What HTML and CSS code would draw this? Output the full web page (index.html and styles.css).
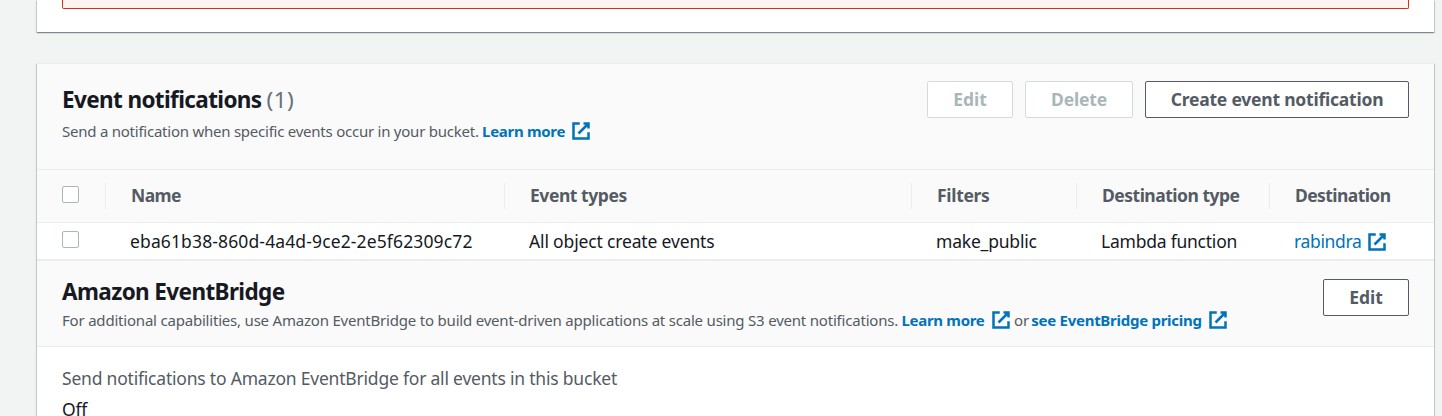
FILE: index.html
```
<!DOCTYPE html>
<html lang="en">
<head>
<meta charset="utf-8">
<title>Event notifications</title>
<link rel="stylesheet" href="styles.css">
</head>
<body>
<svg class="defs" width="0" height="0"><symbol id="external" viewBox="0 0 16 16"><path d="M10 2h4v4M6 10l8-8M14 9.05V14H2V2h5"/></symbol></svg>
<main class="page">
  <section class="card card-prev"><div class="alert"></div></section>
  <section class="card card-main">
    <header class="head head-events">
      <div>
        <h2 class="title"><span class="t-events">Event notifications</span> <span class="count">(1)</span></h2>
        <p class="desc"><span class="d-events">Send a notification when specific events occur in your bucket.</span><a class="link more">Learn more</a><svg class="icon"><use href="#external"/></svg></p>
      </div>
      <div class="actions">
        <button class="btn off b-edit"><span>Edit</span></button>
        <button class="btn off b-delete"><span>Delete</span></button>
        <button class="btn b-create"><span>Create event notification</span></button>
      </div>
    </header>
    <div class="row row-head">
      <div class="cell"><span class="box"></span></div>
      <div class="cell"><span class="h1">Name</span></div>
      <div class="cell"><span class="h2">Event types</span></div>
      <div class="cell"><span class="h3">Filters</span></div>
      <div class="cell"><span class="h4">Destination type</span></div>
      <div class="cell"><span class="h5">Destination</span></div>
    </div>
    <div class="row row-data">
      <div class="cell"><span class="box"></span></div>
      <div class="cell"><span class="c1">eba61b38-860d-4a4d-9ce2-2e5f62309c72</span></div>
      <div class="cell"><span class="c2">All object create events</span></div>
      <div class="cell"><span class="c3">make_public</span></div>
      <div class="cell"><span class="c4">Lambda function</span></div>
      <div class="cell"><a class="dest">rabindra</a><svg class="icon"><use href="#external"/></svg></div>
    </div>
    <header class="head head-bridge">
      <div>
        <h2 class="title"><span class="t-bridge">Amazon EventBridge</span></h2>
        <p class="desc"><span class="d-bridge">For additional capabilities, use Amazon EventBridge to build event-driven applications at scale using S3 event notifications.</span><a class="link more">Learn more</a><svg class="icon"><use href="#external"/></svg><span class="or">or</span><a class="link pricing">see EventBridge pricing</a><svg class="icon"><use href="#external"/></svg></p>
      </div>
      <div class="actions"><button class="btn b-edit"><span>Edit</span></button></div>
    </header>
    <div class="body">
      <div class="label">Send notifications to Amazon EventBridge for all events in this bucket</div>
      <div class="value">Off</div>
    </div>
  </section>
</main>
</body>
</html>
```
FILE: styles.css
```
* { box-sizing: border-box; }
body { margin: 0; background: #f2f3f3; color: #16191f; font: 17.5px/27.5px "Noto Sans", sans-serif; overflow: hidden; }
.defs { display: block; }
.page { height: 416px; padding: 0 8px 0 37px; display: flex; flex-direction: column; gap: 32px; overflow: hidden; }
.card { background: #fff; box-shadow: 0 1px 1px 0 rgba(0,28,36,.3), 1px 1px 1px 0 rgba(0,28,36,.15), -1px 1px 1px 0 rgba(0,28,36,.15); flex: none; }
.card-prev { height: 32px; padding: 0 25px; }
.alert { height: 9px; border: 1px solid #d13212; border-top: 0; border-radius: 0 0 2px 2px; background: #fdf3f1; }
.card-main { height: 380px; border-top: 1px solid #eaeded; margin-top: -1px; }
.head { display: flex; justify-content: space-between; padding: 0 25px; background: #fafafa; border-bottom: 1px solid #eaeded; }
.head-events { height: 106px; padding-top: 17px; }
.head-bridge { height: 86px; padding-top: 18px; }
.title { margin: 0; font-size: 22.5px; line-height: 38px; font-weight: 700; white-space: nowrap; }
.t-events { letter-spacing: -.62px; }
.t-bridge { letter-spacing: -.61px; }
.head-bridge .title { line-height: 26px; margin-bottom: 3px; }
.count { color: #687078; font-weight: 400; letter-spacing: .5px; margin-left: -1px; }
.desc { margin: 0; display: flex; align-items: center; font-size: 15px; line-height: 24px; color: #545b64; white-space: nowrap; }
.d-events { letter-spacing: -.24px; }
.d-bridge { letter-spacing: -.203px; }
.link { color: #0073bb; font-weight: 700; margin-left: 3.4px; }
.more { letter-spacing: -.3px; }
.pricing { letter-spacing: -.27px; margin-left: 2px; }
.or { margin-left: 3.5px; }
.icon { width: 20px; height: 20px; margin-left: 6px; fill: none; stroke: #0073bb; stroke-width: 2; flex: none; }
.actions { display: flex; gap: 12px; }
.btn { height: 37px; padding: 0; border: 1px solid #545b64; border-radius: 2px; background: #fff; color: #545b64; font: 700 17.5px/35px "Noto Sans", sans-serif; white-space: nowrap; }
.off { border-color: #d5dbdb; color: #aab7b8; }
.b-edit { width: 86px; }
.b-delete { width: 108px; letter-spacing: -.15px; }
.b-create { width: 264px; letter-spacing: -.22px; }
.row { display: grid; grid-template-columns: 69px 399px 407px 165px 193px 164px; align-items: center; white-space: nowrap; }
.row-head { height: 53px; background: #fafafa; border-bottom: 1px solid #eaeded; color: #545b64; font-weight: 700; }
.row-data { height: 38px; border-bottom: 2px solid #eaeded; padding-top: 2px; }
.cell { display: flex; align-items: center; padding-left: 25px; height: 26px; }
.row-data .cell + .cell { padding-left: 24px; }
.row-head .cell:not(:last-child) { border-right: 1px solid #eaeded; }
.h1 { letter-spacing: -.6px; }
.h2 { letter-spacing: -.44px; }
.h3 { letter-spacing: -.3px; }
.h4 { letter-spacing: -.5px; }
.h5 { letter-spacing: -.58px; }
.c1 { letter-spacing: .13px; }
.c2 { letter-spacing: -.16px; }
.c3 { letter-spacing: -.2px; }
.c4 { letter-spacing: -.23px; }
.box { width: 17px; height: 17px; border: 1px solid #aab7b8; border-radius: 2px; background: #fff; margin-bottom: 3px; }
.row-data .box { margin-bottom: 5px; }
.dest { color: #0073bb; letter-spacing: -.35px; }
.body { padding: 18px 25px 0; }
.label { color: #545b64; letter-spacing: -.207px; margin-bottom: 3px; }
.value { letter-spacing: -.2px; }
```
